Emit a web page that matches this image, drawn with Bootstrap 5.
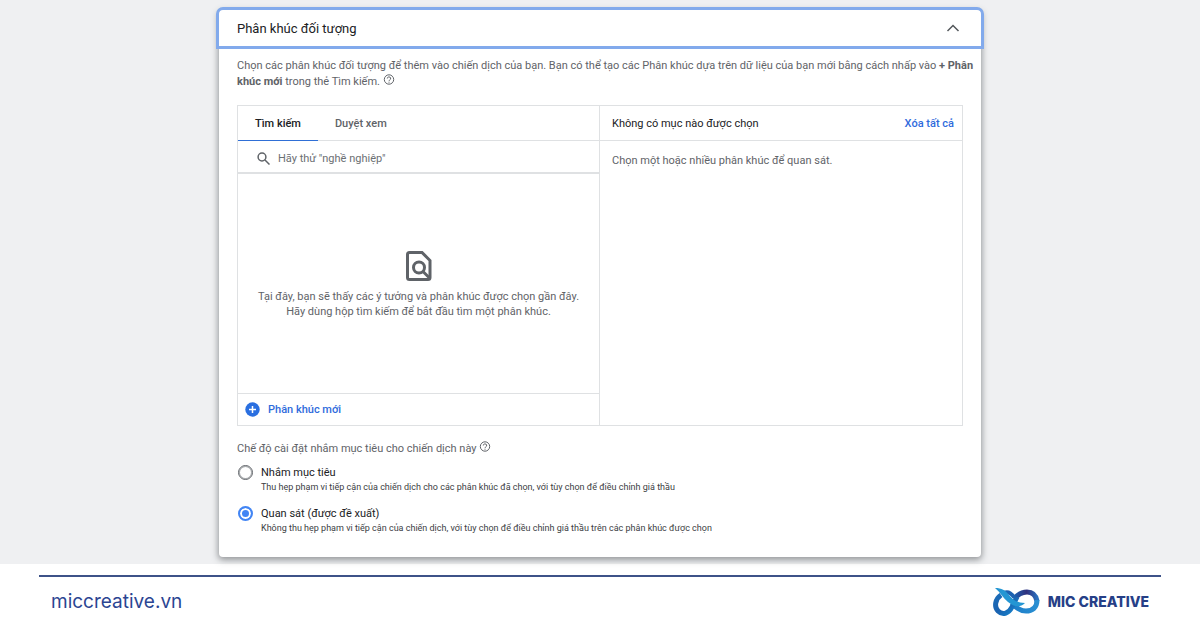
<!DOCTYPE html>
<html lang="vi">
<head>
<meta charset="utf-8">
<meta name="viewport" content="width=device-width, initial-scale=1">
<title>Phân khúc đối tượng</title>
<link href="https://cdn.jsdelivr.net/npm/bootstrap@5.3.0/dist/css/bootstrap.min.css" rel="stylesheet">
<style>
  body { font-family: Roboto, "Liberation Sans", sans-serif; font-size: 11px; line-height: 15px; color: #5f6368; background: #fff; }
  .stage { background: #eff0f2; padding: 10px 16px 7px; }
  .segment-card { max-width: 762px; border-radius: 4px; box-shadow: 0 2px 6px 1px rgba(60,64,67,.5); }
  .segment-head { height: 36px; padding: 0 20px 0 18px; border-radius: 4px 4px 0 0; outline: 3px solid #82aaec; font-size: 13px; color: #202124; }
  .segment-body { padding: 12px 6px 21px 18px; }
  .intro-text { line-height: 16px; }
  .ink { color: #202124; }
  .help-icon { vertical-align: baseline; }
  .picker { border: 1px solid #dfe1e3; margin: 15px 12px 0 0; }
  .picker-left { border-right: 1px solid #dfe1e3; }
  .picker-bar { height: 35px; border-bottom: 1px solid #dfe1e3; }
  .tab-btn { border: 0; background: none; height: 35px; padding: 0 17px; color: #5f6368; font-size: 11px; font-weight: 500; }
  .tab-btn.active { color: #202124; box-shadow: inset 0 -1px #2f6fd6; }
  .search-row { height: 33px; padding: 3px 0 0 19px; border-bottom: 2px solid #dfe1e3; }
  .search-row input { border: 0; outline: 0; padding: 0; font-size: 11px; color: #5f6368; background: none; }
  .search-row input::placeholder { color: #6b6f73; opacity: 1; }
  .empty-state { height: 219px; padding-top: 3px; }
  .new-row { height: 32px; padding-left: 7px; border-top: 1px solid #dfe1e3; }
  .action-link { color: #2f6bdc; font-size: 11px; font-weight: 500; text-decoration: none; background: none; border: 0; padding: 0; }
  .mode-set { margin-top: 15px; }
  .mode-option { margin-top: 9px; gap: 8px; }
  .mode-option + .mode-option { margin-top: 11px; }
  .mode-option input { appearance: none; flex: none; width: 15px; height: 15px; margin: 0 0 0 1px; border: 1px solid #5f6368; border-radius: 50%; box-shadow: inset 0 0 0 1px #a5a8ab; }
  .mode-option input:checked { border: 2px solid #4285f4; background: #4285f4; box-shadow: inset 0 0 0 2px #fff; }
  .mode-note { font-size: 9px; color: #3c4043; }
  .site-foot { padding: 11px 39px 8px; color: #263f87; }
  .foot-line { border-top: 2px solid #3d5288; padding: 10px 12px 0 12px; }
  .site-url { color: #2b4592; font-size: 19px; line-height: 30px; font-family: Inter, sans-serif; text-decoration: none; }
  .brand-name { font-family: Inter, sans-serif; font-weight: 800; font-size: 14px; line-height: 30px; }
</style>
</head>
<body>
<main class="stage">
  <section class="segment-card bg-white mx-auto">
    <header class="segment-head d-flex align-items-center justify-content-between bg-white">
      <span>Phân khúc đối tượng</span>
      <button class="btn p-0 border-0 d-flex" type="button" aria-label="Thu gọn">
        <svg width="16" height="12" viewBox="0 0 16 12" fill="none" stroke="#54585c" stroke-width="1.5"><path d="M2.5 9 8 3.500 13.500 9"/></svg>
      </button>
    </header>
    <div class="segment-body">
      <p class="intro-text mb-0">Chọn các phân khúc đối tượng để thêm vào chiến dịch của bạn. Bạn có thể tạo các Phân khúc dựa trên dữ liệu của bạn mới bằng cách nhấp vào <strong>+ Phân khúc mới</strong> trong thẻ Tìm kiếm.
        <svg class="help-icon" width="12" height="11" viewBox="0 1.500 12 11" fill="none" stroke="#5f6368"><circle cx="6" cy="7" r="4.700"/><path d="M4.300 6a1.700 1.600 0 1 1 2.500 1.400Q6 7.900 6 8.500M6 9.200v1"/></svg>
      </p>
      <div class="picker row g-0">
        <div class="picker-left col-6">
          <div class="picker-bar d-flex" role="tablist">
            <button class="tab-btn active" type="button" role="tab" aria-selected="true">Tìm kiếm</button>
            <button class="tab-btn" type="button" role="tab" aria-selected="false">Duyệt xem</button>
          </div>
          <label class="search-row d-flex align-items-center gap-2">
            <svg width="13" height="13" viewBox="0 0 13 13" fill="none" stroke="#5f6368" stroke-width="1.500"><circle cx="5" cy="5" r="3.900"/><path d="m8 8 4.500 4.500"/></svg>
            <input class="flex-grow-1" type="text" placeholder='Hãy thử "nghề nghiệp"' aria-label="Tìm phân khúc">
          </label>
          <div class="empty-state d-flex flex-column align-items-center justify-content-center text-center">
            <svg class="mb-2" width="26" height="30" viewBox="0 0 26 30" fill="none" stroke="#5f6368" stroke-width="3"><path d="M3.500 1.500H16l8 8v17q0 2-2 2H3.500q-2 0-2-2v-23q0-2 2-2Z"/><circle cx="13" cy="16.500" r="5.500"/><path d="m16.500 20 7.500 7.500"/></svg>
            <div>Tại đây, bạn sẽ thấy các ý tưởng và phân khúc được chọn gần đây.<br>Hãy dùng hộp tìm kiếm để bắt đầu tìm một phân khúc.</div>
          </div>
          <div class="new-row d-flex align-items-center">
            <button class="action-link d-flex align-items-center gap-2" type="button">
              <svg width="15" height="15" viewBox="0 0 15 15"><circle cx="7.500" cy="7.500" r="7.200" fill="#2a6fe0"/><path d="M7.500 4v7M4 7.500h7" stroke="#fff" stroke-width="1.500"/></svg>
              Phân khúc mới
            </button>
          </div>
        </div>
        <div class="col-6">
          <div class="picker-bar d-flex align-items-center justify-content-between ps-2 pe-2">
            <span class="ink ms-1">Không có mục nào được chọn</span>
            <button class="action-link" type="button">Xóa tất cả</button>
          </div>
          <p class="ms-2 ps-1 mt-2 mb-0 pt-1">Chọn một hoặc nhiều phân khúc để quan sát.</p>
        </div>
      </div>
      <div class="mode-set" role="radiogroup" aria-labelledby="mode-title">
        <div id="mode-title">Chế độ cài đặt nhắm mục tiêu cho chiến dịch này
          <svg class="help-icon" width="12" height="11" viewBox="0 1.500 12 11" fill="none" stroke="#5f6368"><circle cx="6" cy="7" r="4.700"/><path d="M4.300 6a1.700 1.600 0 1 1 2.500 1.400Q6 7.900 6 8.500M6 9.200v1"/></svg>
        </div>
        <label class="mode-option d-flex"><input type="radio" name="mode">
          <span><span class="ink d-block">Nhắm mục tiêu</span><span class="mode-note d-block">Thu hẹp phạm vi tiếp cận của chiến dịch cho các phân khúc đã chọn, với tùy chọn để điều chỉnh giá thầu</span></span></label>
        <label class="mode-option d-flex"><input type="radio" name="mode" checked>
          <span><span class="ink d-block">Quan sát (được đề xuất)</span><span class="mode-note d-block">Không thu hẹp phạm vi tiếp cận của chiến dịch, với tùy chọn để điều chỉnh giá thầu trên các phân khúc được chọn</span></span></label>
      </div>
    </div>
  </section>
</main>
<footer class="site-foot">
  <div class="foot-line d-flex justify-content-between align-items-center">
    <a class="site-url" href="#">miccreative.vn</a>
    <div class="d-flex align-items-center gap-2">
      <svg width="48" height="30" viewBox="0 0 48 30" fill="none" stroke-width="5">
        <defs>
          <linearGradient id="ga" x1="0" y1="0" x2="1" y2="1"><stop offset="0" stop-color="#1b6cb8"/><stop offset=".5" stop-color="#1a62b0"/><stop offset="1" stop-color="#1687cf"/></linearGradient>
          <linearGradient id="gb" x1="0" y1="0" x2="1" y2="0"><stop offset="0" stop-color="#1d62b1"/><stop offset=".55" stop-color="#30307d"/><stop offset="1" stop-color="#2a6fbd"/></linearGradient>
          <linearGradient id="gc" x1="0" y1="0" x2="1" y2="0"><stop offset="0" stop-color="#1b7cc8"/><stop offset="1" stop-color="#2a8fd2"/></linearGradient>
        </defs>
        <path d="M22 12c4-5 8-7 13-7 6 0 9 4 10 9" stroke="url(#gb)"/>
        <path d="M45 13c0 8-5 11-11 11-6 0-10-3-14-8" stroke="url(#gc)"/>
        <path d="M9 8C3 12 2 20 6 24c5 5 11 2 14-4 2-4 3-6 5-10" stroke="url(#ga)"/>
        <path d="M12 6c4-2 7 0 10 4" stroke="#1d62b1" stroke-width="4"/>
        <path d="M3 1c7 0 10 2 14 7 5 6 9 8 16 8-5 5-11 4-17-1C11 11 8 5 3 1Z" fill="#2496d3"/>
      </svg>
      <span class="brand-name">MIC CREATIVE</span>
    </div>
  </div>
</footer>
<script src="https://cdn.jsdelivr.net/npm/bootstrap@5.3.0/dist/js/bootstrap.bundle.min.js"></script>
</body>
</html>
